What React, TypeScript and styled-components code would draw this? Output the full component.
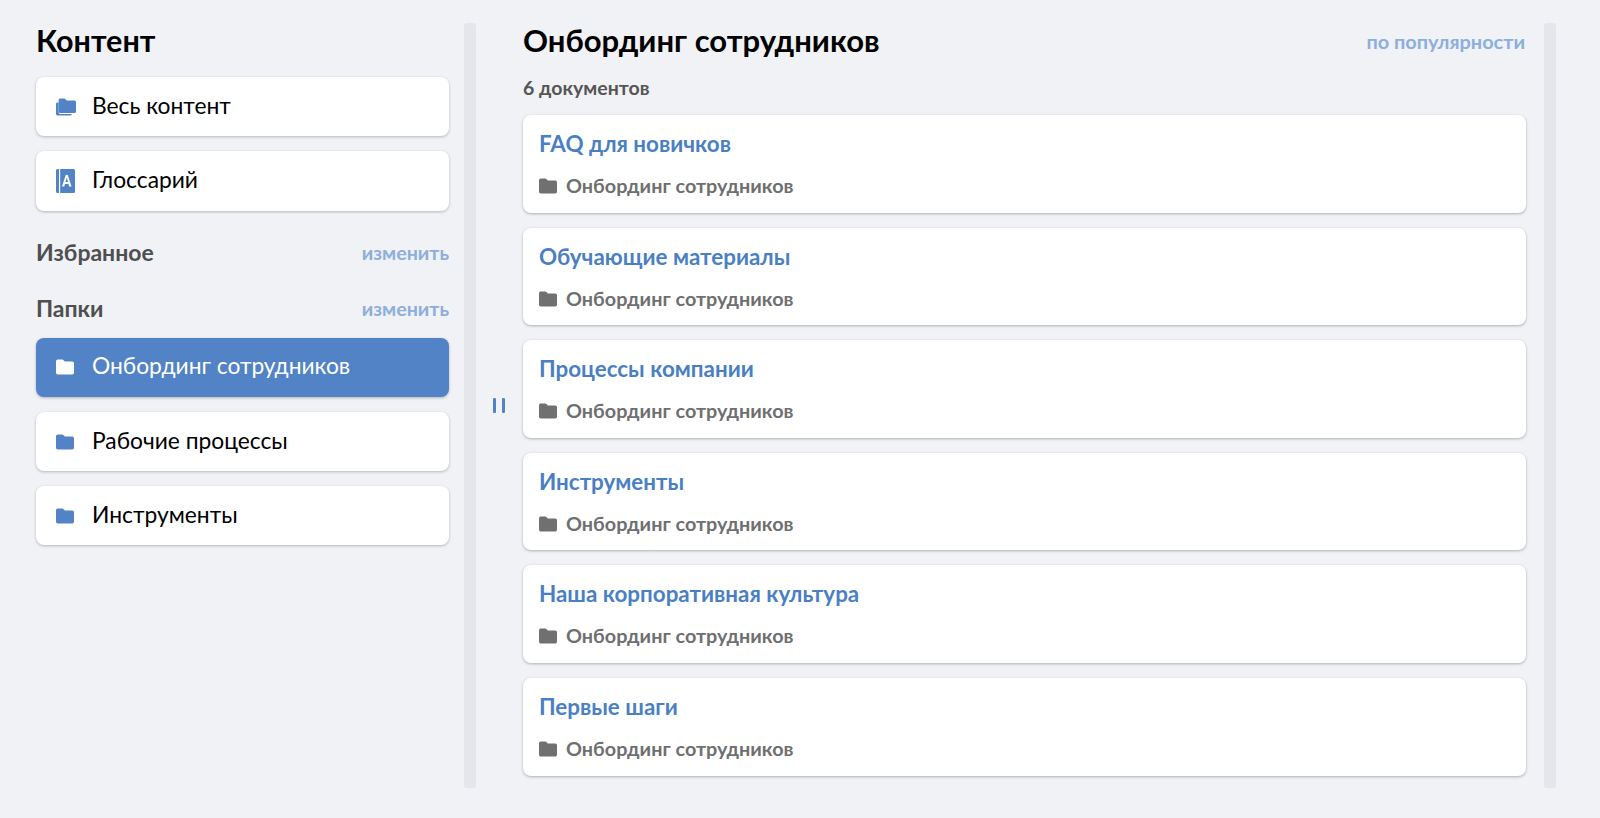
import React from "react";
import styled, { createGlobalStyle } from "styled-components";

const Global = createGlobalStyle`
  html, body { margin: 0; padding: 0; background: #f0f2f6; }
`;

const Page = styled.div`
  width: 1600px;
  height: 818px;
  display: flex;
  background: #f0f2f6;
  box-sizing: border-box;
  padding: 23px 0 30px 36px;
  overflow: hidden;
  font-family: "Lato", "Noto Sans", sans-serif;
`;

const Sidebar = styled.aside`
  width: 413px;
  display: flex;
  flex-direction: column;
`;

const SideTitle = styled.h1`
  margin: 0 0 19px;
  font-size: 30.5px;
  line-height: 35px;
  font-weight: 700;
  color: #000;
`;

const NavCard = styled.div<{ $active?: boolean }>`
  height: 59.3px;
  flex: none;
  margin-bottom: 15px;
  border-radius: 8px;
  display: flex;
  align-items: center;
  gap: 18px;
  padding-left: 20px;
  background: ${(p) => (p.$active ? "#5183c6" : "#fff")};
  color: ${(p) => (p.$active ? "#fff" : "#000")};
  box-shadow: 0 1px 3px rgba(0, 0, 0, 0.25);
  font-size: 22.8px;
`;

const NavLabel = styled.span`
  padding-bottom: 4px;
`;

const SectionGroup = styled.div`
  display: flex;
  flex-direction: column;
  gap: 28px;
  margin: 13px 0 15px;
`;

const SectionRow = styled.div`
  display: flex;
  justify-content: space-between;
  align-items: center;
  height: 28px;
`;

const SectionName = styled.span`
  font-size: 23px;
  font-weight: 700;
  color: #4f4f4f;
  padding-bottom: 2px;
`;

const EditLink = styled.span`
  font-size: 19.7px;
  font-weight: 700;
  color: #8eaedb;
`;

const Rail = styled.div<{ $end?: boolean }>`
  width: 12px;
  height: 765px;
  flex: none;
  background: #e4e6eb;
  border-radius: 3px;
  margin-left: ${(p) => (p.$end ? "18px" : "15px")};
`;

const Handle = styled.div`
  width: 45px;
  margin-right: 2px;
  height: 765px;
  display: flex;
  align-items: center;
  justify-content: center;
  gap: 6px;
`;

const HandleBar = styled.span`
  width: 3px;
  height: 15px;
  border-radius: 1px;
  background: #5183c6;
`;

const Main = styled.main`
  width: 1003px;
  display: flex;
  flex-direction: column;
`;

const MainHead = styled.div`
  display: flex;
  justify-content: space-between;
  align-items: center;
  height: 35px;
`;

const MainTitle = styled.h2`
  margin: 0;
  font-size: 31px;
  line-height: 35px;
  font-weight: 700;
  color: #000;
`;

const SortLink = styled.span`
  font-size: 19.9px;
  font-weight: 700;
  color: #8eaedb;
  margin-right: 1px;
`;

const Count = styled.div`
  margin: 19px 0 16px;
  font-size: 19.5px;
  line-height: 22px;
  font-weight: 700;
  color: #555;
`;

const DocCard = styled.div`
  height: 97.6px;
  flex: none;
  box-sizing: border-box;
  margin-bottom: 15px;
  padding: 15px 16px 0;
  background: #fff;
  border-radius: 8px;
  box-shadow: 0 1px 3px rgba(0, 0, 0, 0.28);
`;

const DocTitle = styled.div`
  font-size: 22.4px;
  line-height: 27px;
  font-weight: 700;
  color: #4a7fc4;
`;

const DocPath = styled.div`
  margin-top: 16px;
  display: flex;
  align-items: center;
  gap: 9px;
  font-size: 19.8px;
  line-height: 24px;
  font-weight: 700;
  color: #6f6f6f;
`;

const IconSlot = styled.span<{ $drop?: boolean }>`
  width: 18px;
  flex: none;
  display: flex;
  justify-content: center;
  padding-top: ${(p) => (p.$drop ? "2px" : "0")};
  & > svg { flex: none; }
`;

const Folder = ({ color }: { color: string }) => (
  <svg width="18" height="16" viewBox="0 0 18 16">
    <path
      d="M0 2.2A1.7 1.7 0 0 1 1.7.5h4.6c.4 0 .8.2 1.1.5l1.4 1.500h7.500A1.700 1.700 0 0 1 18 4.200v9.600a1.700 1.700 0 0 1-1.700 1.700H1.700A1.700 1.700 0 0 1 0 13.800z"
      fill={color}
    />
  </svg>
);

const Folders = () => (
  <svg width="21" height="20" viewBox="0 0 21 20">
    <path d="M3.600 5.500H2.400A1.400 1.400 0 0 0 1 6.900v10.200a1.400 1.400 0 0 0 1.400 1.400h13a1.400 1.400 0 0 0 1.400-1.400V17H5a1.400 1.400 0 0 1-1.400-1.400z" fill="#5183c6" />
    <path d="M3.600 3A1.500 1.500 0 0 1 5.100 1.500h4.200c.4 0 .7.2 1 .5l1.200 1.400h8A1.500 1.500 0 0 1 21 4.900v9.600A1.500 1.500 0 0 1 19.500 16H5.100a1.500 1.500 0 0 1-1.500-1.500z" fill="#5183c6" />
  </svg>
);

const Glossary = () => (
  <svg width="19" height="24" viewBox="0 0 19 24">
    <path d="M1.500 0h16A1.500 1.500 0 0 1 19 1.500v21a1.500 1.500 0 0 1-1.500 1.500h-16A1.500 1.500 0 0 1 0 22.500v-21A1.500 1.500 0 0 1 1.500 0z" fill="#5183c6" />
    <rect x="3" y="0" width="1.200" height="24" fill="#fff" />
    <path fillRule="evenodd" d="M9.700 6h2.100l3.700 11.500h-2.300l-.8-2.600H9l-.8 2.600H6zM10.700 8.500l-1.200 4.400h2.500z" fill="#fff" />
  </svg>
);

const docs = [
  "FAQ для новичков",
  "Обучающие материалы",
  "Процессы компании",
  "Инструменты",
  "Наша корпоративная культура",
  "Первые шаги",
];

export default function App() {
  return (
    <Page>
      <Global />
      <Sidebar>
        <SideTitle>Контент</SideTitle>
        <NavCard><IconSlot><Folders /></IconSlot><NavLabel>Весь контент</NavLabel></NavCard>
        <NavCard><IconSlot><Glossary /></IconSlot><NavLabel>Глоссарий</NavLabel></NavCard>
        <SectionGroup>
          <SectionRow><SectionName>Избранное</SectionName><EditLink>изменить</EditLink></SectionRow>
          <SectionRow><SectionName>Папки</SectionName><EditLink>изменить</EditLink></SectionRow>
        </SectionGroup>
        <NavCard $active><IconSlot><Folder color="#fff" /></IconSlot><NavLabel>Онбординг сотрудников</NavLabel></NavCard>
        <NavCard><IconSlot><Folder color="#5183c6" /></IconSlot><NavLabel>Рабочие процессы</NavLabel></NavCard>
        <NavCard><IconSlot><Folder color="#5183c6" /></IconSlot><NavLabel>Инструменты</NavLabel></NavCard>
      </Sidebar>
      <Rail />
      <Handle><HandleBar /><HandleBar /></Handle>
      <Main>
        <MainHead><MainTitle>Онбординг сотрудников</MainTitle><SortLink>по популярности</SortLink></MainHead>
        <Count>6 документов</Count>
        {docs.map((d) => (
          <DocCard key={d}>
            <DocTitle>{d}</DocTitle>
            <DocPath><IconSlot $drop><Folder color="#707070" /></IconSlot>Онбординг сотрудников</DocPath>
          </DocCard>
        ))}
      </Main>
      <Rail $end />
    </Page>
  );
}
